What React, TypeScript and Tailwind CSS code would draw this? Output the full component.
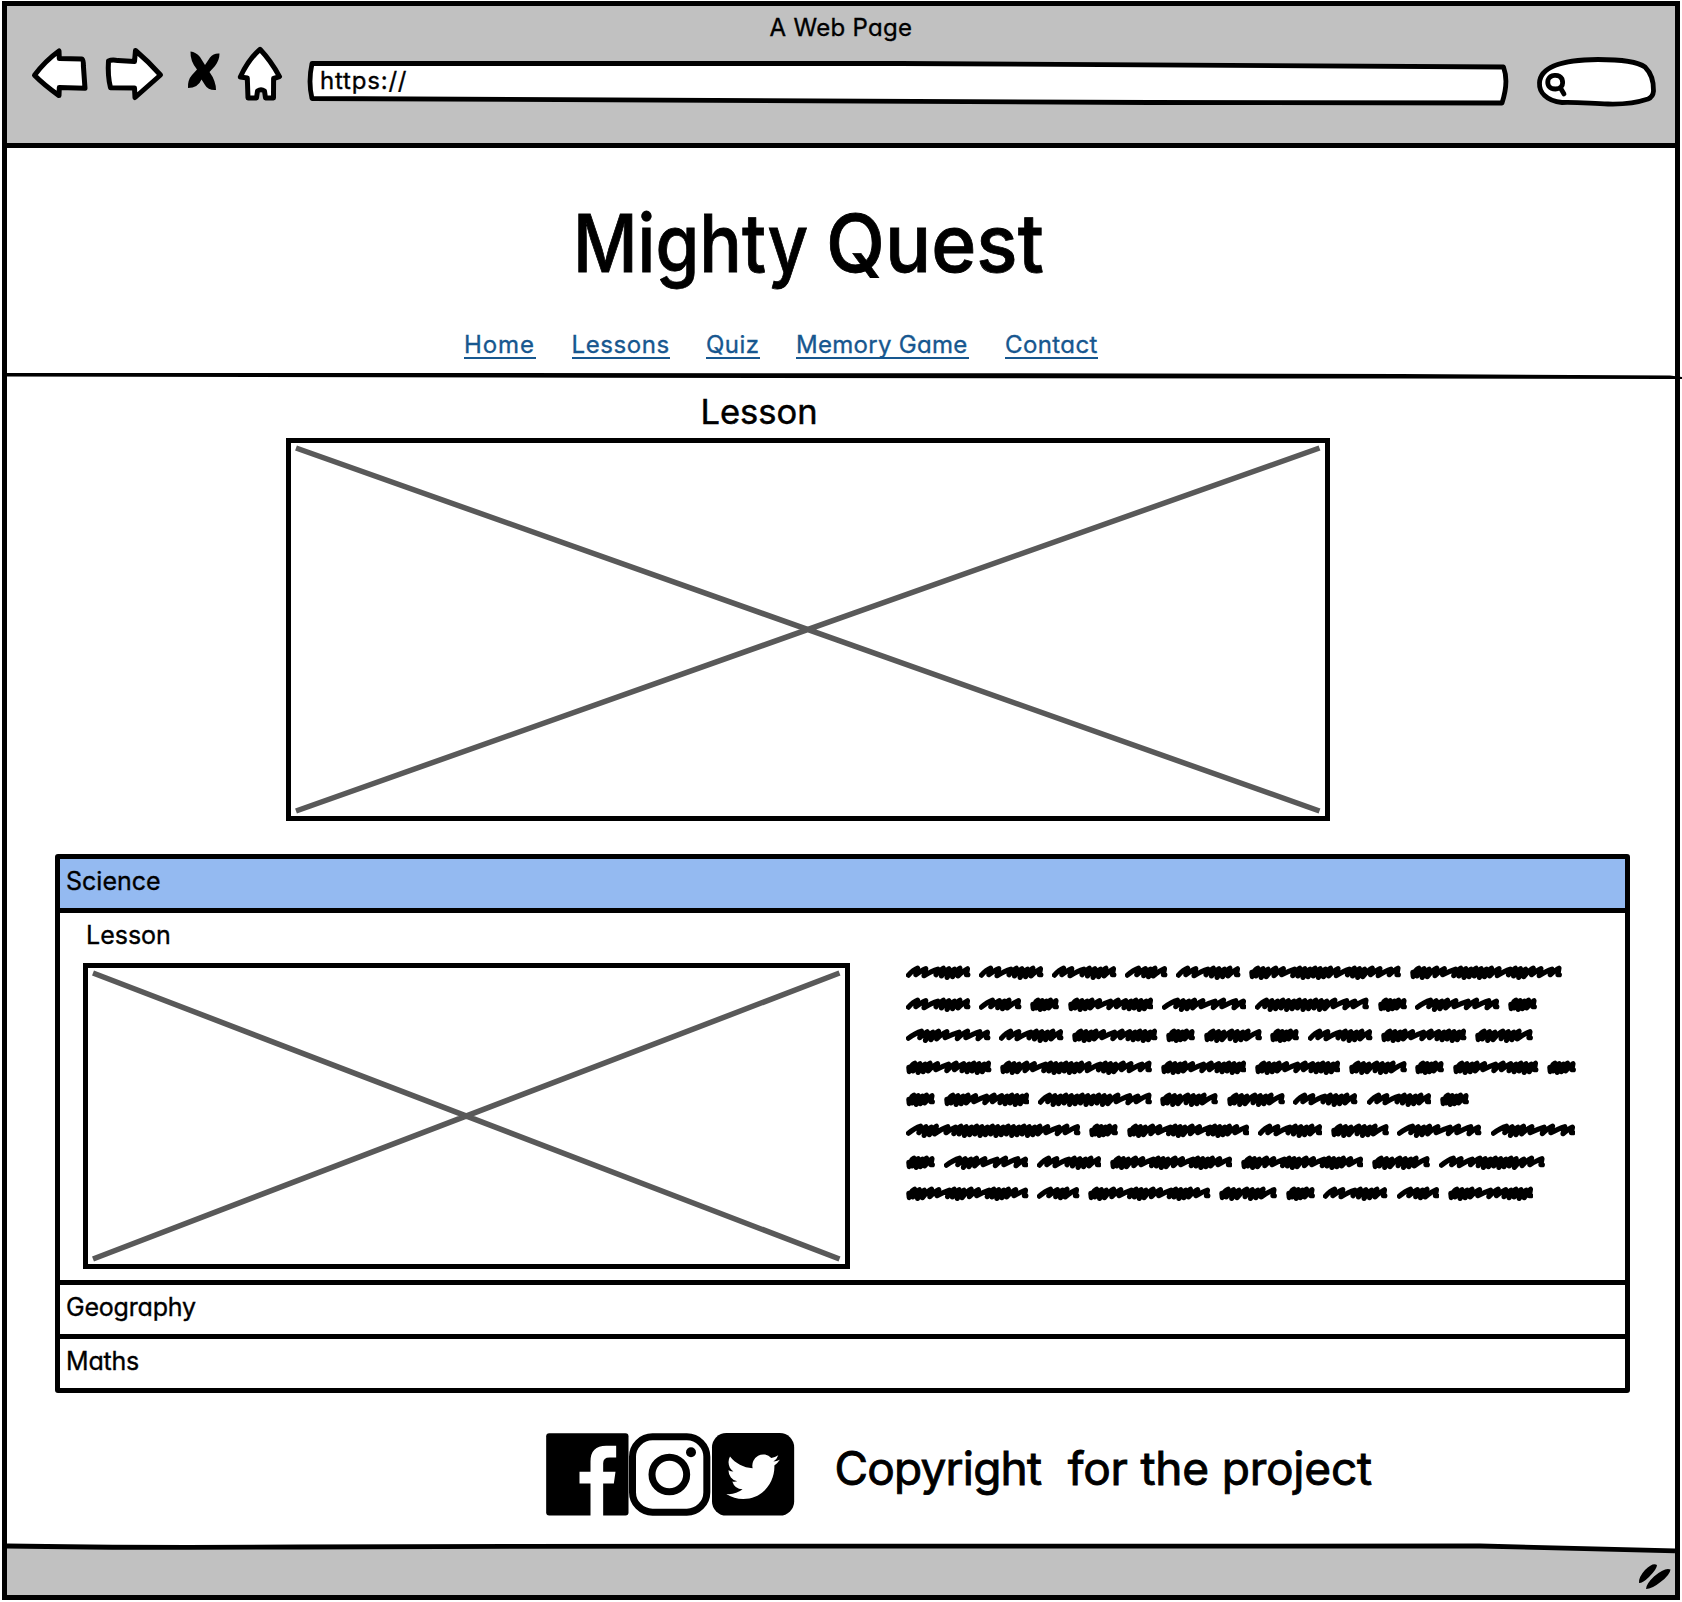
import type { ReactNode } from "react";

/* Scribbled placeholder words: each letter is one pen tooth (d = tight, s = medium, l = long). */
const WORDS: Record<string, { w: number; teeth: string }> = {
  A: { w: 64.5, teeth: "ssldddds" },
  B: { w: 42.5, teeth: "lsddl" },
  C: { w: 29, teeth: "dddds" },
  D: { w: 85.5, teeth: "ddddslssddddd" },
  E: { w: 84.5, teeth: "ldddslsls" },
  F: { w: 58, teeth: "dddsdddl" },
  G: { w: 152, teeth: "dddssldddddddsldddssls" },
  H: { w: 114, teeth: "sdddddddddddslsl" },
  I: { w: 122.5, teeth: "dddssldddsslddddsl" },
  J: { w: 174.5, teeth: "ldddlsddddddddddddddddslsl" },
  K: { w: 106, teeth: "lslsdddddddssl" },
};

const LINES = ["AAABAGG", "ABCDEHCEC", "EADCFCADF", "DGDDFCDC", "CDHFFAAC", "JCIAFEE", "CEAIIFK", "IBIFCABD"];

function scribble(teeth: string, width: number) {
  const size: Record<string, number> = { d: 5.1, s: 7.6, l: 11 };
  const total = [...teeth].reduce((sum, t) => sum + size[t], 0);
  const tight = teeth[0] === "d";
  const start = tight ? 2.8 : 2.4;
  const k = (width - start - 3.2) / total;
  let x = start;
  let d = tight ? `M${x} 7.4 L${x + 0.4} 11.6 L${x + 3} 5.5` : `M${x} 10.2`;
  [...teeth].forEach((t, i) => {
    const a = size[t] * k;
    const top = 3.2 + ((i * 7) % 3) * 0.5;
    const low = t === "d" ? 11 + ((i * 5) % 3) * 0.7 : 9.8 + (i % 2) * 0.9;
    const peak = Math.min(x + a + 0.9, width - 3);
    d += ` Q${(x + a * 0.6).toFixed(1)} ${(top + 1.6).toFixed(1)} ${peak.toFixed(1)} ${top.toFixed(1)}`;
    x += a;
    d += ` L${(x - 0.9).toFixed(1)} ${i === teeth.length - 1 ? 9.8 : low.toFixed(1)}`;
  });
  return `${d} L${width - 2.6} 9.8`;
}

function Word({ kind }: { kind: string }) {
  const { w, teeth } = WORDS[kind];
  return (
    <svg width={w} height="15" viewBox={`0 0 ${w} 15`} className="block shrink-0" fill="none" stroke="#000" strokeWidth="5.1" strokeLinecap="round" strokeLinejoin="round">
      <path d={scribble(teeth, w)} />
    </svg>
  );
}

function Placeholder({ w, h, className }: { w: number; h: number; className: string }) {
  return (
    <div className={`border-5 border-black ${className}`}>
      <svg width={w} height={h} viewBox={`0 0 ${w} ${h}`} className="block" stroke="#595959" strokeWidth="5.5">
        <path d={`M5 5 L${w - 5.5} ${h - 5} M${w - 5.5} 5 L5 ${h - 5}`} />
      </svg>
    </div>
  );
}

function Row({ children, className }: { children: ReactNode; className: string }) {
  return <div className={`flex items-center pb-1 pl-[6px] text-[25px] leading-none ${className}`}>{children}</div>;
}

const LINKS = [
  { label: "Home", className: "w-[71.5px] tracking-[0.9px]" },
  { label: "Lessons", className: "w-[98.5px] tracking-[0.6px]" },
  { label: "Quiz", className: "w-[54px] tracking-[0.5px]" },
  { label: "Memory Game", className: "w-[173px] tracking-[0.3px]" },
  { label: "Contact", className: "w-[93px] tracking-[0.4px]" },
];

function BrowserBar() {
  return (
    <header className="h-[142px] border-b-5 border-black bg-[#c1c1c1]">
      <div className="flex h-[42px] items-center justify-center pt-[2px] text-[24px] tracking-[0.3px]">A Web Page</div>
      <div className="flex h-16 pl-6">
        <svg width="57" height="64" viewBox="31 48 57 64" className="overflow-visible" fill="#fff" stroke="#000" strokeWidth="5" strokeLinejoin="round">
          <path d="M34.5 75.3 Q45 61 59 51 L59.3 58.6 L82 58.9 Q83.5 60 83.4 66 L85 88.3 L59.3 87.6 L59 95.6 Q44 85 34.5 75.3Z" />
        </svg>
        <svg width="60" height="64" viewBox="104 48 60 64" className="ml-4 overflow-visible" fill="#fff" stroke="#000" strokeWidth="5" strokeLinejoin="round">
          <path d="M108.5 61 Q112 59.3 118 60.6 L134.5 61.5 L135.5 50.5 Q149 62 160.5 75 L135 97.5 L134.5 88 L110.5 87.7 Q107.5 76 108.5 61Z" />
        </svg>
        <svg width="35" height="64" viewBox="186 48 35 64" className="ml-[22px]">
          <path d="M190.5 51.5 Q196 52 200 57 L205 65 L210 57.500 Q213.500 53 219.5 53.500 Q219.500 60 215 66 L209.500 72 Q216 81 216 90 Q208 90.500 205 85 L201.500 79.500 Q198 88 188 88 Q187.500 80 192 75 L197 69.500 Q190 61 190.500 51.500Z" />
        </svg>
        <svg width="46" height="64" viewBox="237 48 46 64" className="ml-4 overflow-visible" fill="#fff" stroke="#000" strokeWidth="5" strokeLinejoin="round">
          <path d="M260 49.3 Q271 61 279.5 76.6 L273.6 78.5 L273.5 98 L265.5 98 L264.5 91 Q261 88.5 257.5 91 L256.5 98 L248 98 L247.3 78 L240.3 77 Q248 60 260 49.3Z" />
        </svg>
        <div className="relative ml-[23px] h-16 w-[1204px] pt-2 pl-[14px]">
          <svg width="1204" height="64" viewBox="306 48 1204 64" className="absolute top-0 left-0 overflow-visible" fill="#fff" stroke="#000" strokeWidth="4.8" strokeLinejoin="round">
            <path d="M312 63.5 L900 63.5 L1503.5 67 Q1509 82 1502 103 L1150 102.5 L312 98.5 Q308 82 312 63.5Z" />
          </svg>
          <div className="relative text-[24px] leading-[50px] tracking-[0.8px]">https://</div>
        </div>
        <svg width="124" height="64" viewBox="1535 48 124 64" className="ml-[25px] overflow-visible" fill="none" stroke="#000" strokeWidth="4.8" strokeLinecap="round" strokeLinejoin="round">
          <path fill="#fff" d="M1562 102.5 C1546 101 1539 92 1539.5 83 C1540 70 1554 60 1598 59.5 C1622 59.5 1638 62 1645 67 Q1654 76 1653.5 91 Q1653 97 1648 99 C1636 103 1625 104.5 1608 104 C1590 103.5 1578 102 1562 102.5Z" />
          <path d="M1555.5 89 C1549 89 1547 85 1548 80 C1550 74.5 1559 73.5 1562 79 C1564 85 1561 89 1555.5 89 M1560.5 88 L1564 94" />
        </svg>
      </div>
    </header>
  );
}

function Social() {
  return (
    <div className="flex">
      <svg width="82.5" height="83" viewBox="47.5 70 247.5 248">
        <rect x="48" y="70" width="247" height="247" rx="9" />
        <path fill="#fff" d="M181 319 V221 H148 V186 H181 V155 Q181 108 228 108 H258 V143 H238 Q219 143 219 160 V186 H256 L251 221 H219 V319Z" />
      </svg>
      <svg width="82.5" height="83" viewBox="297 70 247.5 248" fill="none" stroke="#000" strokeWidth="21">
        <rect x="307.5" y="81" width="223" height="226" rx="60" />
        <circle cx="418" cy="194" r="52" />
        <circle cx="483" cy="127" r="15" fill="#000" stroke="none" />
      </svg>
      <svg width="83.5" height="83" viewBox="544 70 250 248">
        <rect x="547" y="70" width="246" height="247" rx="43" />
        <path
          fill="#fff"
          transform="translate(590 118.5) scale(6.67 6.85)"
          d="M23.953 4.57a10 10 0 01-2.825.775 4.958 4.958 0 002.163-2.723c-.951.555-2.005.959-3.127 1.184a4.92 4.92 0 00-8.384 4.482C7.69 8.095 4.067 6.13 1.64 3.162a4.822 4.822 0 00-.666 2.475c0 1.71.87 3.213 2.188 4.096a4.904 4.904 0 01-2.228-.616v.06a4.923 4.923 0 003.946 4.827 4.996 4.996 0 01-2.212.085 4.936 4.936 0 004.604 3.417 9.867 9.867 0 01-6.102 2.105c-.39 0-.779-.023-1.17-.067a13.995 13.995 0 007.557 2.209c9.053 0 13.998-7.496 13.998-13.985 0-.21 0-.42-.015-.63A9.935 9.935 0 0024 4.59z"
        />
      </svg>
    </div>
  );
}

export default function App() {
  return (
    <div className="h-[1602px] w-[1682px] overflow-hidden bg-white px-[2px] pt-px pb-[2px] font-['Inter',sans-serif] text-black [-webkit-text-stroke:0.35px_currentColor] [font-feature-settings:'cv11']">
      <div className="flex h-full flex-col border-5 border-black">
        <BrowserBar />

        <section className="h-[225px] pt-11">
          <h1 className="flex pl-[566px] text-[80px] leading-[101px] font-medium [-webkit-text-stroke:0.8px_currentColor]">
            <span className="inline-block origin-left scale-x-[0.885]">Mighty</span>
            <span className="-ml-[12.5px] inline-block origin-left scale-x-[0.96]">Quest</span>
          </h1>
          <nav className="mt-[37px] flex gap-9 pl-[457px] text-[24px] leading-[28px] text-[#17578f]">
            {LINKS.map((l) => (
              <a key={l.label} href="#" className={`h-[29px] border-b-2 border-[#17578f] leading-[29px] whitespace-nowrap ${l.className}`}>
                {l.label}
              </a>
            ))}
          </nav>
        </section>
        <svg width="1675" height="6" viewBox="7 373 1675 6" className="block shrink-0 overflow-visible">
          <path d="M7 373 L400 373 L1000 373.3 L1400 374 L1670 375.5 L1682 377 L1682 379 L1670 379 L1400 378.5 L1000 378.2 L600 377.7 L7 376.5Z" />
        </svg>

        <h2 className="h-[59px] pt-[5px] pl-[693.5px] text-[34.5px] leading-[55px] [-webkit-text-stroke:0.5px_currentColor]">Lesson</h2>
        <Placeholder w={1034} h={373} className="ml-[279px] h-[383px] w-[1044px] shrink-0" />

        <section className="mt-[33px] ml-[48px] w-[1575px] shrink-0 rounded-[3px] border-5 border-black">
          <Row className="h-[49px] bg-[#94baf1]">Science</Row>
          <div className="flex h-[377px] border-y-5 border-black">
            <div className="ml-[23px] pt-[5px]">
              <div className="pl-[3px] text-[25px] leading-[35px]">Lesson</div>
              <Placeholder w={757} h={296} className="mt-[10px] h-[306px] w-[767px]" />
            </div>
            <div className="ml-[56px] pt-[44px]">
              {LINES.map((line, i) => (
                <div key={i} className="flex h-[31.6px] items-center gap-[8.6px]">
                  {[...line].map((kind, j) => (
                    <Word key={j} kind={kind} />
                  ))}
                </div>
              ))}
            </div>
          </div>
          <Row className="h-[49px] tracking-[-0.2px]">Geography</Row>
          <Row className="h-[54px] border-t-5 border-black tracking-[-0.2px]">Maths</Row>
        </section>

        <section className="mt-10 flex h-[83px] shrink-0 pl-[539px]">
          <Social />
          <p className="ml-[40px] flex gap-[26.5px] text-[46px] leading-[71px] [-webkit-text-stroke:0.9px_currentColor]">
            <span className="tracking-[-0.8px]">Copyright</span>
            <span className="tracking-[-0.2px]">for the project</span>
          </p>
        </section>

        <footer className="relative mt-auto flex h-[50px] shrink-0 justify-end bg-[#c1c1c1]">
          <svg width="1668" height="12" viewBox="7 1543 1668 12" className="absolute -top-[2px] left-0 overflow-visible">
            <path fill="#fff" d="M7 1543 H1675 V1550.5 L1490 1546 H7Z" />
            <path fill="none" stroke="#000" strokeWidth="4.8" d="M7 1546 Q120 1548 300 1547 L520 1546.3 L1480 1546 L1675 1550.8" />
          </svg>
          <svg width="40" height="50" viewBox="1635 1545 40 50">
            <path d="M1639 1583 Q1638.5 1577 1645 1570 Q1653 1562 1657 1565 Q1657 1569 1649 1577 Q1643 1583 1639 1583Z M1646 1589 Q1646 1584 1654 1576.5 Q1665 1567 1670.5 1569.5 Q1670 1575 1660.5 1582 Q1652 1589 1646 1589Z" />
          </svg>
        </footer>
      </div>
    </div>
  );
}
